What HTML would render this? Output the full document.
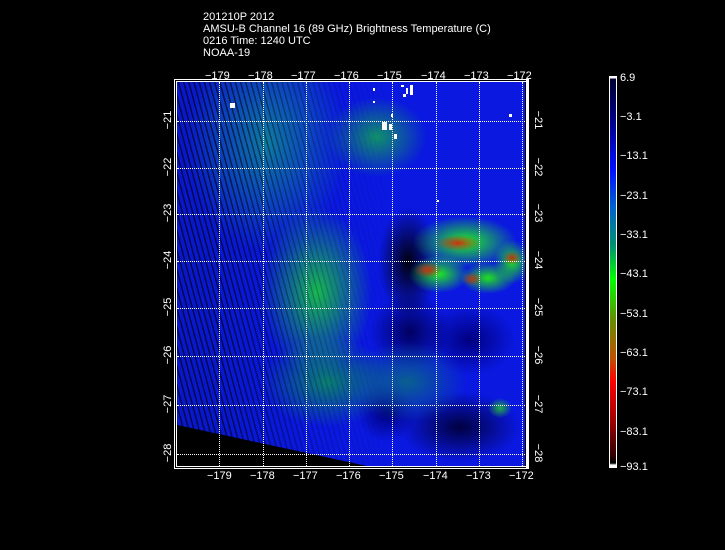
<!DOCTYPE html>
<html><head><style>
body{margin:0;background:#000;width:725px;height:550px;overflow:hidden;position:relative;font-family:"Liberation Sans","DejaVu Sans",sans-serif;color:#fff}
.t{position:absolute;font-size:11px;line-height:12px;white-space:pre}
#hdr{left:203px;top:11px}
#map{position:absolute;left:177px;top:82px;width:348px;height:384px;overflow:hidden;
background:
radial-gradient(ellipse 22px 8px at 281px 161px,#d03010,rgba(200,60,0,0) 100%),
radial-gradient(ellipse 14px 8px at 251px 188px,#c83010,rgba(200,60,0,0) 100%),
radial-gradient(ellipse 9px 7px at 335px 176px,#c03010,rgba(200,60,0,0) 100%),
radial-gradient(ellipse 10px 7px at 295px 197px,#b04010,rgba(200,60,0,0) 100%),
radial-gradient(ellipse 52px 26px at 288px 160px,#20f020,rgba(20,200,20,0) 100%),
radial-gradient(ellipse 30px 19px at 262px 192px,#20e820,rgba(20,200,20,0) 100%),
radial-gradient(ellipse 28px 16px at 311px 196px,#20e020,rgba(20,200,20,0) 100%),
radial-gradient(ellipse 18px 22px at 335px 180px,#20e020,rgba(20,200,20,0) 100%),
radial-gradient(ellipse 12px 10px at 323px 326px,#20b040,rgba(20,160,40,0) 100%),
radial-gradient(ellipse 55px 85px at 140px 210px,#18b850,rgba(10,120,90,0) 100%),
radial-gradient(ellipse 50px 40px at 200px 55px,#10906a,rgba(10,120,90,0) 100%),
radial-gradient(ellipse 65px 45px at 150px 300px,#0a8070,rgba(10,120,90,0) 100%),
radial-gradient(ellipse 60px 40px at 230px 300px,#0a6090,rgba(10,120,90,0) 100%),
radial-gradient(ellipse 80px 110px at 90px 60px,#0e7aa0,rgba(10,120,90,0) 100%),
radial-gradient(ellipse 30px 55px at 231px 180px,#000010,rgba(0,0,20,0) 100%),
radial-gradient(ellipse 40px 40px at 233px 250px,#000060,rgba(0,0,60,0) 100%),
radial-gradient(ellipse 45px 35px at 293px 258px,#000080,rgba(0,0,60,0) 100%),
radial-gradient(ellipse 60px 35px at 283px 345px,#000040,rgba(0,0,60,0) 100%),
radial-gradient(ellipse 30px 30px at 210px 330px,#00007a,rgba(0,0,60,0) 100%),
linear-gradient(90deg,#0818c8,#0a18e0 40%,#0a18e0);
}
#map .pos{position:absolute}
#stripes{position:absolute;left:0;top:0;width:348px;height:384px;
background:repeating-linear-gradient(75deg,rgba(0,0,0,.6) 0 1.5px,transparent 1.5px 5px);
-webkit-mask-image:linear-gradient(90deg,#000 0,#000 50px,rgba(0,0,0,.5) 110px,rgba(0,0,0,.2) 160px,transparent 210px);
mask-image:linear-gradient(90deg,#000 0,#000 50px,rgba(0,0,0,.5) 110px,rgba(0,0,0,.2) 160px,transparent 210px)}
.vl{position:absolute;top:0;height:384px;width:0;border-left:1px dotted #fff}
.hl{position:absolute;left:0;width:348px;height:0;border-top:1px dotted #fff}
.rl{position:absolute;font-size:11px;width:24px;text-align:center;line-height:12px}
</style></head><body>
<div class="t" id="hdr">201210P 2012
AMSU-B Channel 16 (89 GHz) Brightness Temperature (C)
0216 Time: 1240 UTC
NOAA-19</div>

<div id="map">
<div id="stripes"></div>
<svg class="pos" width="348" height="384" style="left:0;top:0">
<polygon points="0,343 190,384 0,384" fill="#000"/>
<g fill="#fff">
<rect x="53" y="21" width="5" height="5"/><rect x="196" y="6" width="2" height="3"/><rect x="196" y="19" width="2" height="2"/>
<rect x="224" y="3" width="3" height="2"/><rect x="229" y="6" width="2" height="6"/><rect x="233" y="3" width="3" height="10"/><rect x="226" y="12" width="3" height="3"/>
<rect x="205" y="40" width="5" height="8"/><rect x="212" y="42" width="3" height="6"/><rect x="217" y="52" width="3" height="5"/><rect x="214" y="32" width="2" height="3"/>
<rect x="332" y="32" width="3" height="3"/><rect x="260" y="118" width="2" height="2"/>
</g>
</svg>
<div class="vl" style="left:42px"></div><div class="vl" style="left:86px"></div><div class="vl" style="left:129px"></div><div class="vl" style="left:172px"></div><div class="vl" style="left:215px"></div><div class="vl" style="left:259px"></div><div class="vl" style="left:302px"></div><div class="vl" style="left:345px"></div>
<div class="hl" style="top:39px"></div><div class="hl" style="top:86px"></div><div class="hl" style="top:132px"></div><div class="hl" style="top:179px"></div><div class="hl" style="top:226px"></div><div class="hl" style="top:274px"></div><div class="hl" style="top:323px"></div><div class="hl" style="top:372px"></div>
</div>
<div style="position:absolute;left:174px;top:79px;width:353px;height:388px;border:1px solid #fff"></div>
<div style="position:absolute;left:176px;top:81px;width:349px;height:384px;border:1px solid #fff"></div>
<div style="position:absolute;left:526px;top:80px;width:3px;height:388px;background:#fff"></div>

<div class="t" style="left:205px;top:70px">−179</div><div class="t" style="left:248px;top:70px">−178</div><div class="t" style="left:291px;top:70px">−177</div><div class="t" style="left:334px;top:70px">−176</div><div class="t" style="left:377px;top:70px">−175</div><div class="t" style="left:421px;top:70px">−174</div><div class="t" style="left:464px;top:70px">−173</div><div class="t" style="left:507px;top:70px">−172</div>
<div class="t" style="left:207px;top:470px">−179</div><div class="t" style="left:250px;top:470px">−178</div><div class="t" style="left:293px;top:470px">−177</div><div class="t" style="left:336px;top:470px">−176</div><div class="t" style="left:379px;top:470px">−175</div><div class="t" style="left:423px;top:470px">−174</div><div class="t" style="left:466px;top:470px">−173</div><div class="t" style="left:509px;top:470px">−172</div>

<div class="rl" style="left:156px;top:114px;transform:rotate(-90deg)">−21</div><div class="rl" style="left:156px;top:161px;transform:rotate(-90deg)">−22</div><div class="rl" style="left:156px;top:207px;transform:rotate(-90deg)">−23</div><div class="rl" style="left:156px;top:254px;transform:rotate(-90deg)">−24</div><div class="rl" style="left:156px;top:301px;transform:rotate(-90deg)">−25</div><div class="rl" style="left:156px;top:349px;transform:rotate(-90deg)">−26</div><div class="rl" style="left:156px;top:398px;transform:rotate(-90deg)">−27</div><div class="rl" style="left:156px;top:447px;transform:rotate(-90deg)">−28</div>
<div class="rl" style="left:526px;top:114px;transform:rotate(90deg)">−21</div><div class="rl" style="left:526px;top:161px;transform:rotate(90deg)">−22</div><div class="rl" style="left:526px;top:207px;transform:rotate(90deg)">−23</div><div class="rl" style="left:526px;top:254px;transform:rotate(90deg)">−24</div><div class="rl" style="left:526px;top:301px;transform:rotate(90deg)">−25</div><div class="rl" style="left:526px;top:349px;transform:rotate(90deg)">−26</div><div class="rl" style="left:526px;top:398px;transform:rotate(90deg)">−27</div><div class="rl" style="left:526px;top:447px;transform:rotate(90deg)">−28</div>

<div style="position:absolute;left:609px;top:76px;width:6px;height:390px;border:1px solid #fff;background:linear-gradient(#fff 0,#fff 1px,#000030 2px,#000090 12%,#0010ff 24%,#0060d0 33%,#009070 43%,#00ff00 52%,#609000 62%,#c05000 72%,#ff0000 78%,#a00000 88%,#300000 97%,#000 99%,#fff 99.5%)"></div>
<div class="t" style="left:620px;top:72px">6.9</div>
<div class="t" style="left:620px;top:111px">−3.1</div>
<div class="t" style="left:620px;top:150px">−13.1</div>
<div class="t" style="left:620px;top:190px">−23.1</div>
<div class="t" style="left:620px;top:229px">−33.1</div>
<div class="t" style="left:620px;top:268px">−43.1</div>
<div class="t" style="left:620px;top:308px">−53.1</div>
<div class="t" style="left:620px;top:347px">−63.1</div>
<div class="t" style="left:620px;top:386px">−73.1</div>
<div class="t" style="left:620px;top:426px">−83.1</div>
<div class="t" style="left:620px;top:461px">−93.1</div>
</body></html>
